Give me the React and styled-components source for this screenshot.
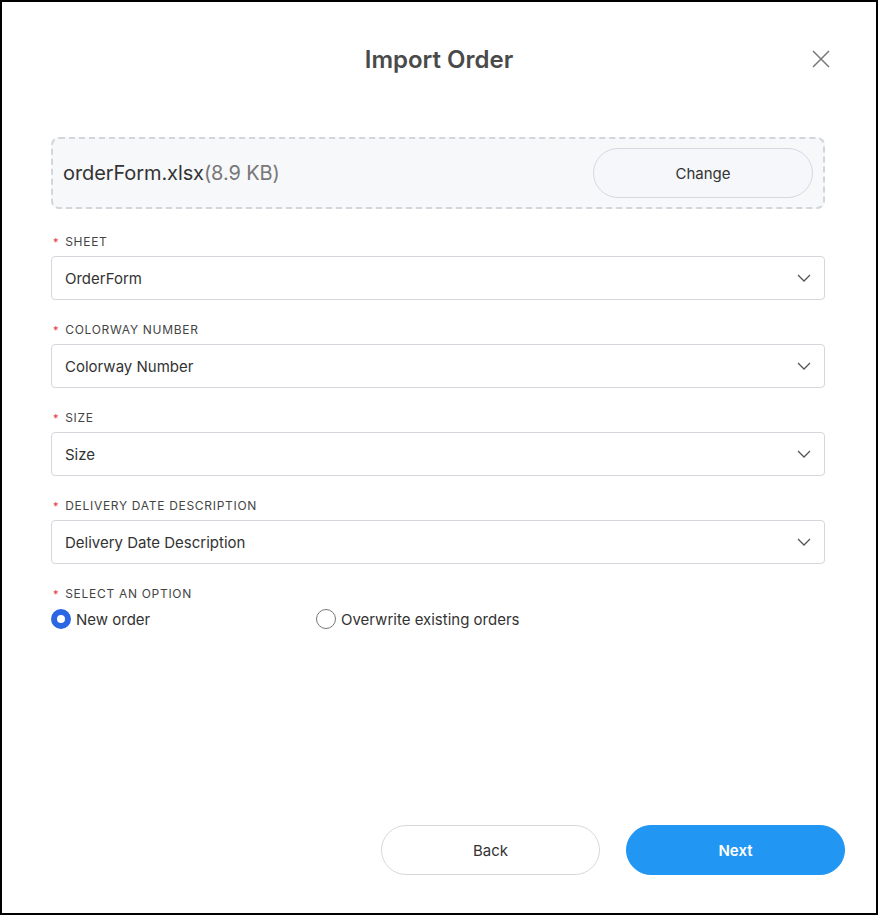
import React, {useState} from "react";
import styled, {createGlobalStyle} from "styled-components";

const GlobalStyle = createGlobalStyle`
  html, body {
    margin: 0;
    padding: 0;
    background: #ffffff;
  }
  * {
    box-sizing: border-box;
  }
  body {
    font-family: Inter, "Noto Sans", "Liberation Sans", sans-serif;
    color: #333;
  }
`;

const Frame = styled.div`
  width: 878px;
  height: 915px;
  border: 2px solid #000;
  background: #fff;
  display: flex;
  flex-direction: column;
`;

const Header = styled.div`
  position: relative;
  display: flex;
  justify-content: center;
  align-items: center;
  padding-top: 42px;
  height: 73px;
`;

const Title = styled.h1`
  margin: 0;
  font-size: 24px;
  line-height: 32px;
  font-weight: 600;
  color: #4a4a4a;
`;

const CloseButton = styled.button`
  position: absolute;
  right: 42px;
  top: 44px;
  width: 26px;
  height: 26px;
  padding: 0;
  border: none;
  background: none;
  display: flex;
  align-items: center;
  justify-content: center;
  cursor: pointer;
`;

const Body = styled.div`
  padding: 62px 51px 0 49px;
  display: flex;
  flex-direction: column;
`;

const FileBox = styled.div`
  height: 72px;
  border: 2px dashed #d2d5da;
  border-radius: 8px;
  background: #f7f8fa;
  display: flex;
  align-items: center;
  justify-content: space-between;
  padding: 0 10px 0 10px;
`;

const FileName = styled.div`
  font-size: 20px;
  letter-spacing: -0.1px;
  color: #333;
`;

const FileSize = styled.span`
  color: #777;
`;

const ChangeButton = styled.button`
  width: 220px;
  height: 50px;
  border-radius: 25px;
  border: 1px solid #d5d8de;
  background: #f5f7fa;
  font-family: inherit;
  font-size: 15px;
  color: #333;
  cursor: pointer;
`;

const Field = styled.div`
  margin-top: ${p => p.$first ? "25px" : "22px"};
  display: flex;
  flex-direction: column;
  gap: ${p => p.$gap || "6px"};
`;

const Label = styled.div`
  font-size: 12px;
  line-height: 16px;
  letter-spacing: 0.7px;
  color: #444;
  text-transform: uppercase;
  display: flex;
  align-items: center;
  padding-left: 2px;
`;

const Star = styled.span`
  color: #e53935;
  font-size: 11px;
  margin-right: 6px;
`;

const Select = styled.div`
  height: 44px;
  border: 1px solid #d3d6db;
  border-radius: 4px;
  display: flex;
  align-items: center;
  justify-content: space-between;
  padding: 0 13px 0 13px;
  font-size: 15px;
  color: #333;
  cursor: pointer;
`;

const RadioRow = styled.div`
  display: grid;
  grid-template-columns: 265px auto;
  align-items: center;
`;

const RadioOption = styled.label`
  display: flex;
  align-items: center;
  gap: 5px;
  font-size: 15px;
  color: #333;
  cursor: pointer;
`;

const RadioCircle = styled.span`
  width: 20px;
  height: 20px;
  border-radius: 50%;
  border: ${p => p.$checked ? "6px solid #2b66e3" : "1px solid #777"};
  background: #fff;
  flex-shrink: 0;
`;

const Footer = styled.div`
  margin-top: auto;
  display: flex;
  justify-content: flex-end;
  gap: 26px;
  padding: 0 31px 38px 0;
`;

const FooterButton = styled.button`
  width: 219px;
  height: 50px;
  border-radius: 25px;
  font-family: inherit;
  font-size: 15px;
  cursor: pointer;
  border: 1px solid ${p => p.$primary ? "#2196f3" : "#d8d8d8"};
  background: ${p => p.$primary ? "#2196f3" : "#fff"};
  color: ${p => p.$primary ? "#fff" : "#333"};
  font-weight: ${p => p.$primary ? 600 : 400};
`;

const Chevron = () => (
    <svg width="14" height="8" viewBox="0 0 14 8" fill="none">
        <path d="M1 1l6 6 6-6" stroke="#555" strokeWidth="1.3"/>
    </svg>
);

const CloseIcon = () => (
    <svg width="18" height="18" viewBox="0 0 18 18" fill="none">
        <path d="M1 1l16 16M17 1L1 17" stroke="#777" strokeWidth="1.5"/>
    </svg>
);

const fields = [
    {label: "Sheet", value: "OrderForm"},
    {label: "Colorway Number", value: "Colorway Number"},
    {label: "Size", value: "Size"},
    {label: "Delivery Date Description", value: "Delivery Date Description"},
];

const App = () => {
    const [option, setOption] = useState("new");

    return (
        <>
            <GlobalStyle/>
            <Frame>
                <Header>
                    <Title>Import Order</Title>
                    <CloseButton aria-label="Close"><CloseIcon/></CloseButton>
                </Header>
                <Body>
                    <FileBox>
                        <FileName>orderForm.xlsx<FileSize>(8.9 KB)</FileSize></FileName>
                        <ChangeButton>Change</ChangeButton>
                    </FileBox>
                    {fields.map((f, i) => (
                        <Field key={f.label} $first={i === 0}>
                            <Label><Star>*</Star>{f.label}</Label>
                            <Select>
                                <span>{f.value}</span>
                                <Chevron/>
                            </Select>
                        </Field>
                    ))}
                    <Field $gap="7px">
                        <Label><Star>*</Star>Select an option</Label>
                        <RadioRow>
                            <RadioOption onClick={() => setOption("new")}>
                                <RadioCircle $checked={option === "new"}/>
                                New order
                            </RadioOption>
                            <RadioOption onClick={() => setOption("overwrite")}>
                                <RadioCircle $checked={option === "overwrite"}/>
                                Overwrite existing orders
                            </RadioOption>
                        </RadioRow>
                    </Field>
                </Body>
                <Footer>
                    <FooterButton>Back</FooterButton>
                    <FooterButton $primary>Next</FooterButton>
                </Footer>
            </Frame>
        </>
    );
};

export default App;
